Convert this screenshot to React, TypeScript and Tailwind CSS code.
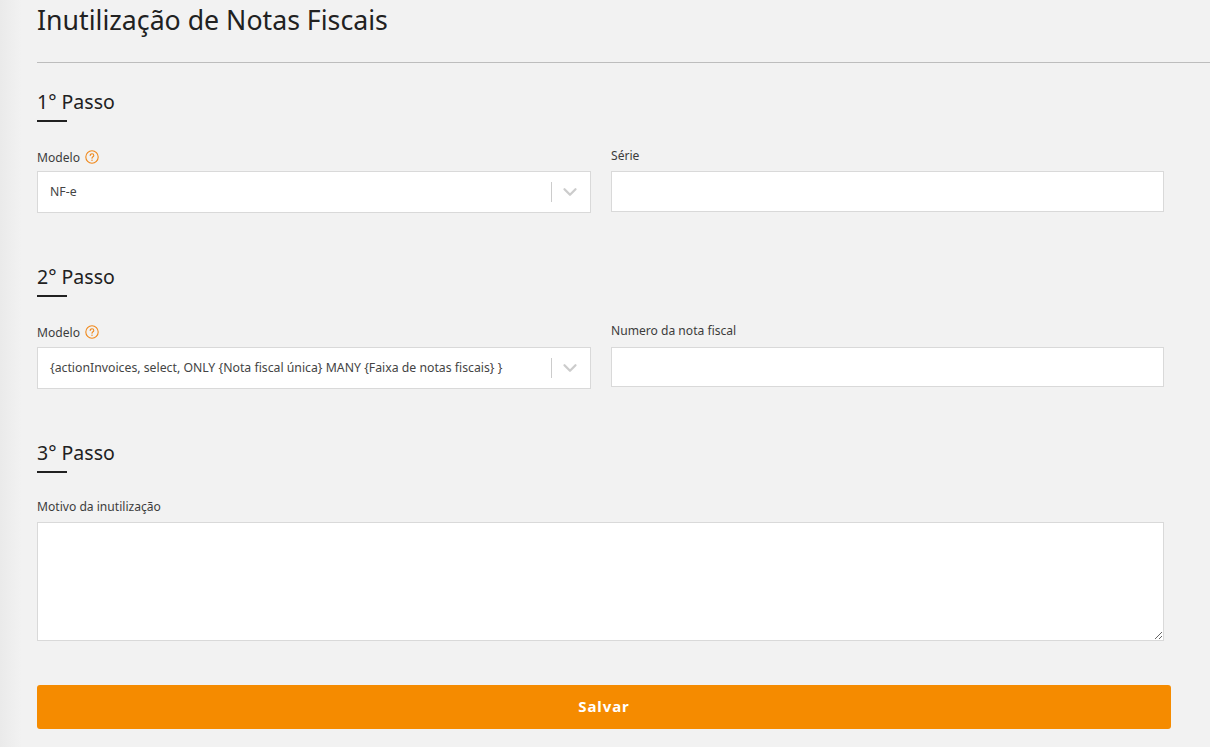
import React from "react";
import { ChevronDown } from "lucide-react";

const Hint = () => (
  <svg width="14" height="14" viewBox="0 0 14 14" fill="none" className="mb-[2px] shrink-0">
    <circle cx="7" cy="7" r="6.2" stroke="#f0881a" strokeWidth="1.1" />
    <path d="M5.2 5.5c0-1 .8-1.7 1.8-1.7s1.8.7 1.8 1.6c0 1.3-1.8 1.4-1.8 2.8" stroke="#f0881a" strokeWidth="1.1" strokeLinecap="round" />
    <circle cx="7" cy="10.2" r=".7" fill="#f0881a" />
  </svg>
);

const StepTitle = ({ children }: { children: React.ReactNode }) => (
  <div>
    <h2 className="text-[19.5px] leading-[26px] text-[#212121]">{children}</h2>
    <div className="mt-[5px] h-[2px] w-[30px] bg-[#212121]" />
  </div>
);

const Select = ({ label, value, inputGap }: { label: string; value: string; inputGap: string }) => (
  <div className="w-[554px] shrink-0">
    <div className="flex h-[20px] items-center gap-[5px] pt-[2px] text-[12.1px] text-[#3c3c3c]">
      {label}
      <Hint />
    </div>
    <div className={`${inputGap} flex h-[42px] items-center border border-[#d9d9d9] bg-white pl-[12px] text-[12.27px] text-[#444444]`}>
      <span className="flex-1 whitespace-nowrap">{value}</span>
      <span className="h-[20px] w-px bg-[#cccccc]" />
      <span className="flex w-[38px] justify-center pr-[2px]">
        <ChevronDown size={22} strokeWidth={2.5} color="#cccccc" />
      </span>
    </div>
  </div>
);

const Input = ({ label, inputGap, height }: { label: string; inputGap: string; height: string }) => (
  <div className="ml-[20px] w-[553px] shrink-0">
    <div className="flex h-[20px] items-center pb-[2px] text-[12.1px] text-[#3c3c3c]">{label}</div>
    <div className={`${inputGap} ${height} border border-[#d9d9d9] bg-white`} />
  </div>
);

export default function App() {
  return (
    <div className="h-[747px] w-[1210px] overflow-hidden bg-[linear-gradient(to_right,#eaeaea,#f2f2f2_22px)] pl-[37px] font-['Noto_Sans',sans-serif]">
      <h1 className="h-[62px] pt-[2px] text-[26.7px] leading-[36px] text-[#212121]">
        Inutilização de Notas Fiscais
      </h1>
      <div className="h-px bg-[#bdbdbd]" />

      <div className="mt-[26px]">
        <StepTitle>1° Passo</StepTitle>
        <div className="mt-[25px] flex">
          <Select label="Modelo" value="NF-e" inputGap="mt-[4px]" />
          <Input label="Série" inputGap="mt-[4px]" height="h-[41px]" />
        </div>
      </div>

      <div className="mt-[51px]">
        <StepTitle>2° Passo</StepTitle>
        <div className="mt-[25px] flex">
          <Select
            label="Modelo"
            value="{actionInvoices, select, ONLY {Nota fiscal única} MANY {Faixa de notas fiscais} }"
            inputGap="mt-[5px]"
          />
          <Input label="Numero da nota fiscal" inputGap="mt-[5px]" height="h-[40px]" />
        </div>
      </div>

      <div className="mt-[51px]">
        <StepTitle>3° Passo</StepTitle>
        <div className="mt-[24px] flex h-[20px] items-center text-[12.1px] text-[#3c3c3c]">Motivo da inutilização</div>
        <textarea className="mt-[5px] block h-[119px] w-[1127px] border border-[#d9d9d9] bg-white" />
      </div>

      <button className="mt-[44px] h-[44px] w-[1134px] rounded-[3px] bg-[#f58b00] pb-[2px] text-[15px] font-bold tracking-[0.9px] text-white">
        Salvar
      </button>
    </div>
  );
}
